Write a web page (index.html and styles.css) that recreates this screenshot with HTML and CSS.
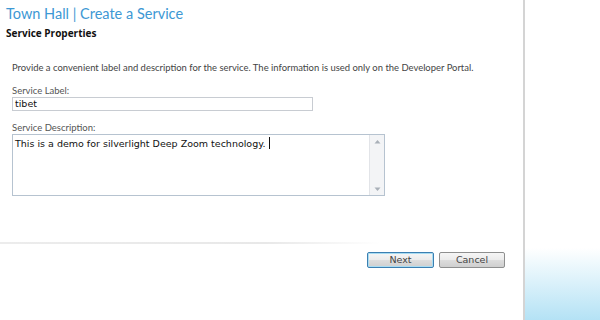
FILE: index.html
```html
<!DOCTYPE html>
<html>
<head>
<meta charset="utf-8">
<link rel="stylesheet" href="styles.css">
</head>
<body>
<div class="page">
  <div class="main">
    <h1 class="title">Town Hall | Create a Service</h1>
    <h2 class="subtitle">Service Properties</h2>
    <p class="intro">Provide a convenient label and description for the service. The information is used only on the Developer Portal.</p>
    <div class="field">
      <div class="label">Service Label:</div>
      <div class="input">tibet</div>
    </div>
    <div class="field">
      <div class="label">Service Description:</div>
      <div class="textarea">
        <div class="ta-text">This is a demo for silverlight Deep Zoom technology. <span class="caret"></span></div>
        <div class="scroll">
          <svg width="7" height="5" viewBox="0 0 7 5"><path d="M0.5 4.5 L3.5 1 L6.5 4.5 Z" fill="#a9b0b8"/></svg>
          <svg width="7" height="5" viewBox="0 0 7 5"><path d="M0.5 0.5 L3.5 4 L6.5 0.5 Z" fill="#a9b0b8"/></svg>
        </div>
      </div>
    </div>
    <div class="sep"></div>
    <div class="buttons">
      <div class="btn btn-primary">Next</div>
      <div class="btn">Cancel</div>
    </div>
  </div>
  <div class="side"></div>
</div>
</body>
</html>
```
FILE: styles.css
```css
html, body {
  margin: 0;
  padding: 0;
  background: #fff;
}
.page {
  display: flex;
  width: 600px;
  height: 320px;
  overflow: hidden;
}
.main {
  width: 525px;
  flex: none;
  border-right: 2px solid #d4d4d4;
  box-sizing: border-box;
  font-family: "Lato", "Open Sans", sans-serif;
}
.side {
  flex: 1;
  background: linear-gradient(to bottom, #ffffff 0, #ffffff 248px, #eaf7fc 268px, #b4e2f5 320px);
}
.title {
  margin: 0;
  padding: 4px 0 0 6px;
  font-size: 14.5px;
  font-weight: normal;
  line-height: 20px;
  color: #3d98d4;
}
.subtitle {
  margin: 0;
  padding: 2px 0 0 6px;
  font-family: "Open Sans", sans-serif;
  font-size: 10px;
  font-weight: bold;
  line-height: 14px;
  color: #111;
}
.intro {
  margin: 21px 0 0 12px;
  font-size: 9.45px;
  line-height: 14px;
  color: #444;
}
.field {
  margin-left: 12px;
}
.label {
  margin-top: 10px;
  font-size: 9.5px;
  line-height: 12px;
  color: #555;
}
.input {
  width: 301px;
  height: 14px;
  box-sizing: border-box;
  border: 1px solid #c8ccd2;
  font-family: "DejaVu Sans", sans-serif;
  font-size: 9.5px;
  line-height: 12px;
  padding-left: 2px;
  color: #111;
}
.field + .field .label {
  margin-top: 11px;
}
.textarea {
  display: flex;
  width: 373px;
  height: 62px;
  box-sizing: border-box;
  border: 1px solid #b6c3d0;
}
.ta-text {
  flex: 1;
  padding: 2px 2px;
  font-family: "DejaVu Sans", sans-serif;
  font-size: 9.5px;
  line-height: 12px;
  color: #111;
}
.caret {
  display: inline-block;
  width: 1px;
  height: 12px;
  background: #111;
  vertical-align: -2px;
}
.scroll {
  width: 15px;
  background: #f3f4f6;
  border-left: 1px solid #e2e4e8;
  display: flex;
  flex-direction: column;
  justify-content: space-between;
  align-items: center;
  padding: 4px 0 3px;
  box-sizing: border-box;
}
.scroll svg {
  display: block;
}
.sep {
  margin-top: 46px;
  height: 2px;
  width: 380px;
  background: linear-gradient(to right, #ececec 0, #e8e8e8 70%, rgba(232,232,232,0) 100%);
}
.buttons {
  display: flex;
  justify-content: flex-end;
  gap: 5px;
  margin-top: 8px;
  padding-right: 18px;
}
.btn {
  width: 66px;
  height: 16px;
  box-sizing: border-box;
  border: 1px solid #8e8f8f;
  border-radius: 2px;
  background: linear-gradient(to bottom, #f6f6f6 0, #ebebeb 50%, #dddddd 51%, #cfcfcf 100%);
  font-family: "DejaVu Sans", sans-serif;
  font-size: 9.5px;
  line-height: 14px;
  text-align: center;
  color: #444;
}
.btn-primary {
  border-color: #3c7fb1;
  box-shadow: inset 0 0 0 1px #a8dcf2;
  width: 67px;
}
```
